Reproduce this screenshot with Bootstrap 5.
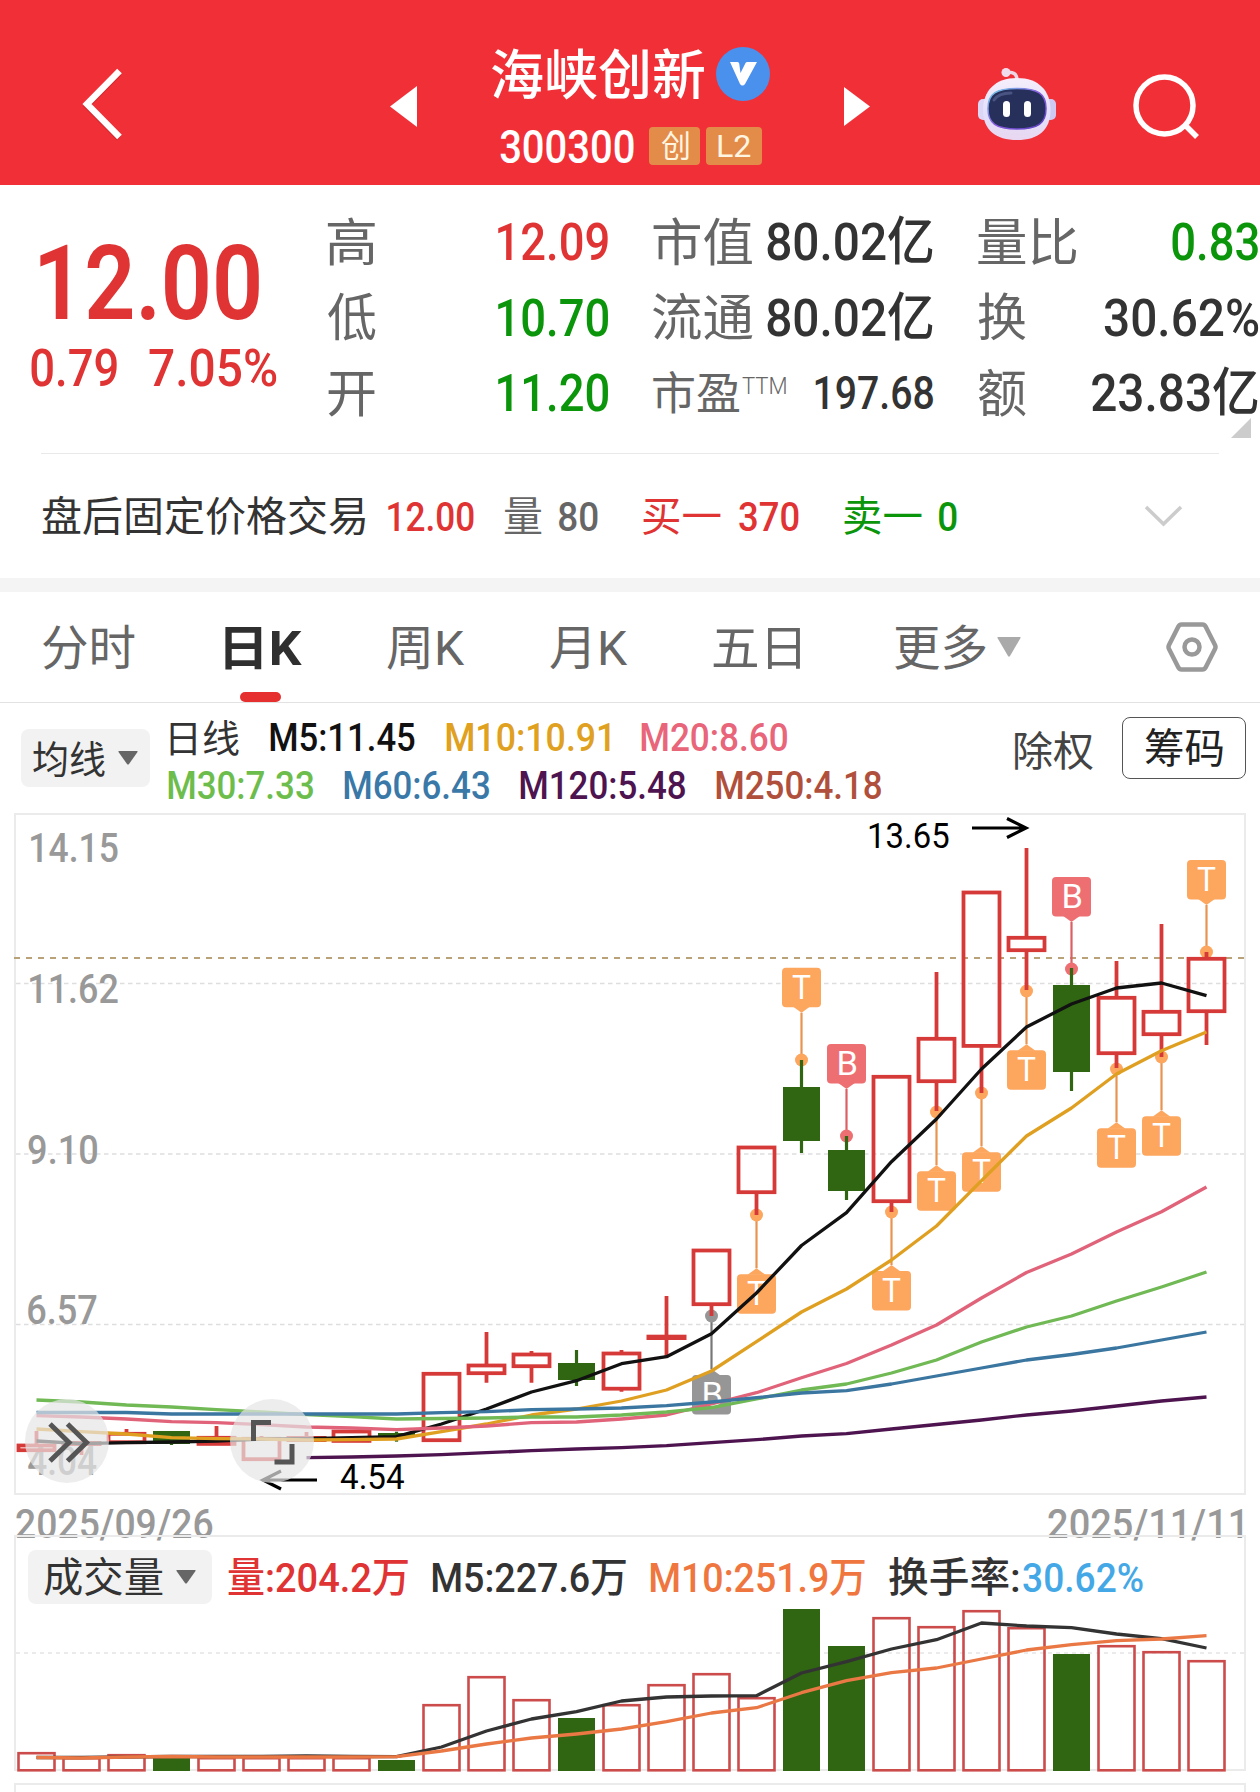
<!DOCTYPE html>
<html lang="zh-CN">
<head>
<meta charset="utf-8">
<meta name="viewport" content="width=device-width, initial-scale=1">
<title>海峡创新 300300</title>
<link href="https://cdn.jsdelivr.net/npm/bootstrap@5.3.0/dist/css/bootstrap.min.css" rel="stylesheet">
<style>
:root{--up:#e03333;--down:#0b950b;--ink:#333;--dim:#666}
body{font-family:Roboto,"Noto Sans CJK SC",sans-serif;color:var(--ink);background:#fff;width:1260px;height:1792px;overflow:hidden}
svg{display:block;flex:none}
[data-w]{display:block;flex:none;white-space:nowrap;line-height:1;padding-top:3px}
[data-w]>span{display:inline-block;transform-origin:0 50%}
.up{color:var(--up)}.down{color:var(--down)}.dim{color:var(--dim)}
.topbar{height:185px;background:#f12f37;color:#fff}
.ic-back{margin:67px 0 0 80px}
.ic-prev{margin:86px 0 0 266px}
.ttl{width:278px;margin-left:75px;padding-top:47px}
.ttl-name{height:54px;gap:12px;font-size:54px;font-weight:500}
.ttl-name [data-w]{padding-top:6px}
.ttl-code{height:38px;margin:26px 0 0 8px;gap:15px;font-size:47px;font-weight:500}
.ttl-code [data-w]{padding-top:0}
.tagbox{height:38px;border-radius:4px;background:#e38c49;color:#fff5e0;font-size:31px;font-weight:400;display:flex;align-items:center;justify-content:center}
.tag-a{width:51px}.tag-b{width:56px}
.vbadge{width:54px;height:54px;border-radius:50%;background:#4a90ed}
.ic-next{margin:87px 0 0 74px}
.ic-bot{margin:66px 0 0 107px}
.ic-find{margin:72px 0 0 75px}
.quote{height:268px;padding-top:19px;position:relative}
.q-price{width:328px;padding:26px 0 0 31px}
.q-big{font-size:103px;font-weight:600;margin:-1px 0 0 9px}
.q-chg{font-size:52px;font-weight:500;gap:32px;margin-top:5px}
.q-col{width:280px;font-size:52px;font-weight:500}
.q-col+.q-col{margin-left:45px}
.q-col>div{height:75.5px}
.q-col .dim{font-weight:400;font-size:51px}
.q-col .pe{font-size:45px}.q-col .pe-v{font-size:46px;padding-top:0}
.q-col .ttm{font-size:24px;font-weight:300;margin:-17px 0 0 2px}
.q-corner{position:absolute;right:9px;bottom:15px;width:20px;height:20px;background:#ccc;clip-path:polygon(100% 0,100% 100%,0 100%)}
.rule{height:1px;background:#e9e9e9;margin:0 41px}
.after{height:124px;padding-left:42px;font-size:41px;font-weight:500}
.after .cj{font-weight:400}
.g-price{margin-left:23px}
.g-vol{margin-left:30px;gap:17px}
.g-buy{margin-left:45px;gap:18px}
.g-sell{margin-left:45px;gap:17px}
.g-more{margin-left:187px}
.band{height:14px;background:#f4f4f4}
.ktabs{height:111px;border-bottom:1px solid #e2e2e2;padding-left:43px;font-size:48px;color:var(--dim)}
.ktabs>div{margin-left:85px}
.ktabs>.on{font-weight:700;color:#2f2f2f;position:relative;margin-left:90px}
.ktabs>.g-drop{margin-left:95px;gap:11px}
.g-set{margin-left:145px}
.on-bar{position:absolute;left:15px;top:70.5px;width:41px;height:10px;border-radius:5px;background:#e63030}
.legend-row{height:107px;padding-left:21px}
.pick{background:#f2f2f2;border-radius:8px}
.pick-ma{width:129px;height:58px;margin-top:26px;padding-left:12px;gap:13px;font-size:38px}
.pick-vol{width:184px;height:54px;margin:13px 0 0 12px;padding-left:16px;gap:13px;font-size:41px}
.ma{font-size:38.5px;font-weight:500;margin-left:18px;padding-top:10px;width:722px}
.ma>div{height:48px;gap:31px}
.ma .cj{font-weight:400;font-size:38px;margin-left:2px}
.m5{color:#111}.m10{color:#e0a020}.m20{color:#e8657a}.m30{color:#6dbd4d}.m60{color:#3a78a8}.m120{color:#4e1450}.m250{color:#b0503c}
.cq{font-size:41px;color:#444;margin:26px 0 0 125px}
.chips{width:124px;height:62px;border:1.5px solid #555;border-radius:8px;margin:14px 0 0 29px;font-size:41px;color:#222}
.kwrap{position:relative;height:690px}
.fab{position:absolute;top:589px;width:84px;height:84px;border-radius:50%;background:rgba(229,229,229,.7);border:0;padding:0}
.fab-a{left:25px}.fab-b{left:230px}
.dates{height:35px;padding:2px 18px 0 16px;font-size:40px;font-weight:500;color:#999}
.volbox{height:236px;margin:0 14px;border:2px solid #ebebeb;position:relative}
.vinfo{height:67px;font-size:41px;font-weight:500}
.vinfo .vals{margin-top:13px;height:54px;margin-left:16px;gap:24px}
.v10{color:#f07640}.vrate{color:#45a8e6}
.subbox{height:20px;margin:12px 14px 0;border:2px solid #ebebeb}
</style>
<script src="https://cdn.jsdelivr.net/npm/bootstrap@5.3.0/dist/js/bootstrap.bundle.min.js"></script>
</head>
<body>
<header class="topbar d-flex align-items-start">
  <svg class="ic-back" width="44" height="74" viewBox="80 67 44 74"><path d="M119 71.500 87 104l32 32.500" fill="none" stroke="#b8222a" stroke-opacity=".5" stroke-width="6" transform="translate(0 2)"/><path d="M119.500 71 87 104l32.500 33" fill="none" stroke="#fff" stroke-width="6.500"/></svg>
  <svg class="ic-prev" width="27" height="41" viewBox="0 0 27 41"><path d="M27 0v41L0 20.500z" fill="#fff"/></svg>
  <div class="ttl">
    <div class="ttl-name d-flex align-items-center">
      <span data-w="212">海峡创新</span>
      <div class="vbadge d-flex align-items-center justify-content-center"><svg width="30" height="24" viewBox="0 0 30 24"><path d="M2 0h7.500q1.500 0 1.700 1.500L12.500 11 17.500 1q.5-1 2-1H29L17 22q-1 1.500-2.500 1.500T12 22z" fill="#fff"/></svg></div>
    </div>
    <div class="ttl-code d-flex align-items-center">
      <span data-w="134">300300</span>
      <div class="d-flex" style="gap:6px"><div class="tagbox tag-a"><span data-w="28">创</span></div><div class="tagbox tag-b"><span data-w="33">L2</span></div></div>
    </div>
  </div>
  <svg class="ic-next" width="26" height="39" viewBox="0 0 26 39"><path d="M0 0v39l26-19.500z" fill="#fff"/></svg>
  <svg class="ic-bot" width="80" height="76" viewBox="977 66 80 76">
    <defs><linearGradient id="shell" x1="0" y1="0" x2="0" y2="1"><stop offset="0" stop-color="#f6eefb"/><stop offset=".6" stop-color="#e3dffa"/><stop offset="1" stop-color="#e9d7f0"/></linearGradient>
    <linearGradient id="rim" x1="0" y1="0" x2="1" y2="1"><stop offset="0" stop-color="#6fd3e8"/><stop offset=".5" stop-color="#8a5be0"/><stop offset="1" stop-color="#5a3fc0"/></linearGradient></defs>
    <path d="M1006 72.500c7-1 11 1 11 8" fill="none" stroke="#eed5e6" stroke-width="3.500"/><circle cx="1006" cy="72.500" r="4.500" fill="#f0dcec"/>
    <rect x="978" y="99" width="12" height="21" rx="5" fill="#dcd6f7"/><rect x="1044" y="99" width="12" height="21" rx="5" fill="#cfc8f3"/>
    <path d="M1017 78c22 0 33.500 13 33.500 32 0 20-12 30-33.500 30s-34-10-34-30c0-19 12-32 34-32z" fill="url(#shell)"/>
    <path d="M1017 88.500c21 0 29 5 29 20s-8 20.500-29 20.500-29-5.500-29-20.500 8-20 29-20z" fill="#27305a" stroke="url(#rim)" stroke-width="1.500"/>
    <path d="M994 100c4-6 11-7 17-7" fill="none" stroke="#4a5482" stroke-width="3" stroke-linecap="round"/>
    <rect x="1003" y="101" width="7" height="16" rx="3.500" fill="#fff"/><rect x="1024" y="101" width="7" height="16" rx="3.500" fill="#fff"/>
  </svg>
  <svg class="ic-find" width="70" height="70" viewBox="1132 72 70 70"><g fill="none" stroke="#fff" stroke-width="5.500"><circle cx="1164.500" cy="105.500" r="28.500"/><path d="M1185 125l12 12"/></g></svg>
</header>

<section class="quote d-flex">
  <div class="q-price">
    <div class="q-big up"><span data-w="219">12.00</span></div>
    <div class="q-chg up d-flex"><span data-w="86">0.79</span><span data-w="127">7.05%</span></div>
  </div>
  <div class="q-col">
    <div class="d-flex align-items-center justify-content-between"><span class="dim" data-w="47">高</span><span class="up" data-w="110">12.09</span></div>
    <div class="d-flex align-items-center justify-content-between"><span class="dim" data-w="48">低</span><span class="down" data-w="110">10.70</span></div>
    <div class="d-flex align-items-center justify-content-between"><span class="dim" data-w="47">开</span><span class="down" data-w="110">11.20</span></div>
  </div>
  <div class="q-col">
    <div class="d-flex align-items-center justify-content-between"><span class="dim" data-w="99">市值</span><span data-w="166">80.02亿</span></div>
    <div class="d-flex align-items-center justify-content-between"><span class="dim" data-w="100">流通</span><span data-w="166">80.02亿</span></div>
    <div class="d-flex align-items-center justify-content-between"><div class="d-flex align-items-center"><span class="dim pe" data-w="87">市盈</span><span class="dim ttm" data-w="44">TTM</span></div><span class="pe-v" data-w="118">197.68</span></div>
  </div>
  <div class="q-col">
    <div class="d-flex align-items-center justify-content-between"><span class="dim" data-w="99">量比</span><span class="down" data-w="86">0.83</span></div>
    <div class="d-flex align-items-center justify-content-between"><span class="dim" data-w="48">换</span><span data-w="154">30.62%</span></div>
    <div class="d-flex align-items-center justify-content-between"><span class="dim" data-w="48">额</span><span data-w="166">23.83亿</span></div>
  </div>
  <div class="q-corner"></div>
</section>
<div class="rule"></div>
<section class="after d-flex align-items-center">
  <span class="cj" data-w="323">盘后固定价格交易</span>
  <div class="g-price up d-flex"><span data-w="86">12.00</span></div>
  <div class="g-vol dim d-flex align-items-center"><span class="cj" data-w="38">量</span><span data-w="39">80</span></div>
  <div class="g-buy up d-flex align-items-center"><span class="cj" data-w="78">买一</span><span data-w="60">370</span></div>
  <div class="g-sell down d-flex align-items-center"><span class="cj" data-w="78">卖一</span><span data-w="18">0</span></div>
  <svg class="g-more" width="40" height="24" viewBox="0 0 40 24"><path d="M2 3l17.500 17L37 3" fill="none" stroke="#ccc" stroke-width="3.500"/></svg>
</section>
<div class="band"></div>
<nav class="ktabs d-flex align-items-center">
  <span data-w="92">分时</span>
  <div class="on"><span data-w="77">日K</span><i class="on-bar"></i></div>
  <div><span data-w="78">周K</span></div>
  <div><span data-w="78">月K</span></div>
  <div><span data-w="87">五日</span></div>
  <div class="g-drop d-flex align-items-center"><span data-w="91">更多</span><svg width="24" height="20" viewBox="0 0 24 20"><path d="M1 0h22q1 0 .5 1L13 19q-1 1.500-2 0L.5 1Q0 0 1 0z" fill="#aaa"/></svg></div>
  <svg class="g-set" width="52" height="50" viewBox="0 0 52 50"><g fill="none" stroke="#999" stroke-width="4.500"><path stroke-linejoin="round" d="M15.500 2.500h21q2 0 3 1.800L49 23q1 2 0 4l-9.500 18.700q-1 1.800-3 1.800h-21q-2 0-3-1.800L3 27q-1-2 0-4l9.500-18.700q1-1.800 3-1.800z"/><circle cx="26" cy="25" r="7.500"/></g></svg>
</nav>
<section class="legend-row d-flex align-items-start">
  <div class="pick pick-ma d-flex align-items-center"><span data-w="72">均线</span><svg width="20" height="14" viewBox="0 0 20 14"><path d="M1 0h18q1 0 .5 1L11 13q-1 1-2 0L.5 1Q0 0 1 0z" fill="#666"/></svg></div>
  <div class="ma">
    <div class="d-flex align-items-center"><span class="cj" data-w="69">日线</span><span class="m5" data-w="145">M5:11.45</span><span class="m10" data-w="164">M10:10.91</span><span class="m20" data-w="146">M20:8.60</span></div>
    <div class="d-flex align-items-center"><span class="m30" data-w="145">M30:7.33</span><span class="m60" data-w="145">M60:6.43</span><span class="m120" data-w="165">M120:5.48</span><span class="m250" data-w="165">M250:4.18</span></div>
  </div>
  <div class="cq"><span data-w="78">除权</span></div>
  <div class="chips d-flex align-items-center justify-content-center"><span data-w="78">筹码</span></div>
</section>
<section class="kwrap">
  <svg id="kchart" width="1260" height="690" viewBox="0 810 1260 690"></svg>
  <button class="fab fab-a"><svg width="84" height="84" viewBox="0 0 84 84"><path d="M25 25l19 18.500L25 62M42.500 25l19 18.500-19 18.500" fill="none" stroke="#555" stroke-width="5"/></svg></button>
  <button class="fab fab-b"><svg width="84" height="84" viewBox="0 0 84 84"><path d="M41 23.500H23.500V42M44.500 63H62V45" fill="none" stroke="#555" stroke-width="5"/></svg></button>
</section>
<div class="dates d-flex justify-content-between"><span data-w="197">2025/09/26</span><span data-w="194">2025/11/11</span></div>
<section class="volbox">
  <div class="vinfo d-flex">
    <div class="pick pick-vol d-flex align-items-center"><span data-w="119" class="fw-normal">成交量</span><svg width="20" height="14" viewBox="0 0 20 14"><path d="M1 0h18q1 0 .5 1L11 13q-1 1-2 0L.5 1Q0 0 1 0z" fill="#666"/></svg></div>
    <div class="vals d-flex align-items-center"><span class="up" data-w="180">量:204.2万</span><span data-w="194">M5:227.6万</span><span class="v10" data-w="215">M10:251.9万</span><div class="d-flex gap-1"><span data-w="130">换手率:</span><span class="vrate" data-w="120">30.62%</span></div></div>
  </div>
  <svg id="vchart" width="1228" height="170" viewBox="16 1604 1228 170" overflow="visible"></svg>
</section>
<div class="subbox"></div>

<script>
const ctx = document.createElement('canvas').getContext('2d');
const FAM = 'Roboto,"Noto Sans CJK SC",sans-serif';
// Condense each label horizontally so that its ink is exactly data-w wide
document.querySelectorAll('[data-w]').forEach(el => {
  const cs = getComputedStyle(el), t = el.textContent, w = +el.dataset.w;
  ctx.font = `${cs.fontWeight} ${cs.fontSize} ${FAM}`;
  const m = ctx.measureText(t), s = w / (m.actualBoundingBoxLeft + m.actualBoundingBoxRight);
  const inner = document.createElement('span');
  inner.textContent = t;
  inner.style.transform = `scaleX(${s}) translateX(${m.actualBoundingBoxLeft}px)`;
  el.replaceChildren(inner);
  el.style.width = w + 'px';
});
function label(t, x, base, w, size, weight, fill) {
  ctx.font = `${weight} ${size}px ${FAM}`;
  const m = ctx.measureText(t), s = w / (m.actualBoundingBoxLeft + m.actualBoundingBoxRight);
  return `<text transform="translate(${x} ${base}) scale(${s} 1) translate(${m.actualBoundingBoxLeft} 0)" font-family='${FAM}' font-size="${size}" font-weight="${weight}" fill="${fill}">${t}</text>`;
}
const X = i => 36.5 + 45 * i, RED = '#d63a38', GREEN = '#306612';
const line = (ys, c, from = 0, w = 3.3) => `<polyline fill="none" stroke="${c}" stroke-width="${w}" stroke-linejoin="round" points="${ys.map((y, k) => X(k + from) + ',' + y).join(' ')}"/>`;

// top, bottom, wick high, wick low, falling
const candles = [
 [1443.7,1452,1431,1452],[1441,1446,1441,1455],[1432,1444,1429,1444],[1431,1444,1431,1445,1],[1436,1445.7,1426,1445],
 [1437,1461,1436,1461],[1436,1442,1432,1442],[1429.7,1442.7,1430,1442],[1433,1437,1431.7,1441.7,1],[1372,1442,1373,1441],
 [1363.7,1375,1332,1382.7],[1352.7,1368,1351,1382.7],[1363,1380,1350,1386,1],[1351.7,1390.5,1350,1391.7],[1334.7,1340,1296,1357.7],
 [1248.7,1306,1250,1316],[1145.7,1194,1147,1215],[1087,1141,1060,1153,1],[1150,1191,1136,1200,1],[1075,1203,1076,1212],
 [1037,1083,972,1111],[890.7,1047.7,892,1093],[936,952,848,990],[985,1072,968,1091,1],[996,1055,961,1068],
 [1010,1036,924,1057],[957,1013,952,1045]];
// candle, letter, dot y, box top, colour, stem colour
const marks = [[15,'B',1316,1375,'#969696','#777'],[16,'T',1215,1274.3,'#fda65e','#e89350'],[17,'T',1060,967.7,'#fda65e','#e89350'],
 [18,'B',1136,1044,'#ee6f72','#dc5f63'],[19,'T',1212,1271,'#fda65e','#e89350'],[20,'T',1112,1171.3,'#fda65e','#e89350'],[21,'T',1093,1152.3,'#fda65e','#e89350'],
 [22,'T',991,1050.3,'#fda65e','#e89350'],[23,'B',969,877,'#ee6f72','#dc5f63'],[24,'T',1069,1128.3,'#fda65e','#e89350'],[25,'T',1057,1116.3,'#fda65e','#e89350'],[26,'T',952,860,'#fda65e','#e89350']];
let k = '<rect x="15" y="814" width="1230" height="680" fill="none" stroke="#ebebeb" stroke-width="2"/>';
for (const y of [983.5, 1154, 1324.5]) k += `<path d="M16 ${y}H1244" stroke="#dedede" stroke-width="1.5" stroke-dasharray="4.500 3.500"/>`;
k += '<path d="M14 958H1245" stroke="#b9a278" stroke-width="2" stroke-dasharray="6 6"/>';
k += label('14.15',31,862,87,40.5,500,'#999') + label('11.62',30,1003,88,40.5,500,'#999') + label('9.10',28,1164,69,40.5,500,'#999') + label('6.57',28,1324,69,40.5,500,'#999') + label('4.04',28,1475,69,40.5,500,'#999');
for (const [i, ch, dot, top, c, lc] of marks) {
  const x = X(i), below = top > dot, apex = below ? top - 6 : top + 45, base = below ? top + .5 : top + 38.5;
  k += `<path d="M${x} ${dot}V${apex}" stroke="${lc}" stroke-width="2.200"/><circle cx="${x}" cy="${dot}" r="6.500" fill="${c}"/>` +
    `<path d="M${x-9} ${base}H${x+9}L${x} ${apex}z" fill="${c}"/><rect x="${x-19.500}" y="${top}" width="39" height="39.500" rx="4" fill="${c}"/>` +
    label(ch, x - (ch === 'T' ? 9.5 : 8), top + 31, ch === 'T' ? 19 : 17.5, 33.5, 400, '#fff');
}
candles.forEach(([t, b, h, l, g], i) => {
  const x = X(i);
  if (g) k += `<path d="M${x} ${h}V${l}" stroke="${GREEN}" stroke-width="3.200"/><rect x="${x-18.500}" y="${t}" width="37" height="${b-t}" fill="${GREEN}"/>`;
  else {
    k += `<path d="M${x} ${h}V${t+1}M${x} ${b-1}V${l}" stroke="${RED}" stroke-width="3.800"/>`;
    k += b - t < 7 ? `<rect x="${x-20}" y="${t}" width="40" height="${b-t}" fill="${RED}"/>`
      : `<rect x="${x-18}" y="${t+1.800}" width="36" height="${b-t-3.600}" fill="none" stroke="${RED}" stroke-width="3.800"/>`;
  }
});
k += line([1457.7,1457,1456,1454.7,1452.7,1450.7,1449,1447.7,1445.7,1442.7,1439.7,1436,1433.7,1429,1424.5,1420,1415,1411,1406,1401,1397], '#4e1450', 6);
k += line([1441,1443.7,1442.7,1442,1441,1439,1438.7,1437.7,1436.7,1424,1409,1392,1380.7,1363.7,1356.7,1333.7,1293,1245.5,1212.7,1161.7,1119,1069,1027,1004,988,983,995.7], '#111');
k += line([1429,1431.7,1434,1437.7,1438.7,1439,1440,1439.7,1439,1431.7,1424,1415,1409,1401,1390,1371,1341.7,1312,1289,1260,1226,1180.7,1136,1108,1074,1050.7,1032], '#dfa022');
k += line([1415.7,1417,1419,1421.7,1422.7,1424.7,1427,1428,1429.7,1428,1426,1422.7,1422,1419,1415,1404,1392.7,1377.7,1363.5,1345,1325,1298,1272.5,1254,1232,1211.7,1187], '#e0637a');
k += line([1400,1402,1405,1407,1409.7,1412,1414.7,1416.7,1419,1418.5,1418,1417,1417,1415,1412,1407.7,1399,1390,1384,1373,1360,1342,1327,1316,1301,1287,1272], '#70b955');
k += line([1412.5,1412.5,1412.5,1414,1414,1414,1414,1414,1414,1412.7,1411.7,1409.7,1409,1408,1405.7,1402,1397.7,1393,1390.7,1384,1376,1368,1360,1354.5,1348,1340,1332], '#3a76a0');
k += label('13.65',869,848,80,35,400,'#000') + label('4.54',340,1489,64,35,400,'#000');
k += '<path d="M972 828H1026M1007 818.500L1026 828 1007 837.500M317 1480H263M281 1471L263 1480 281 1489" fill="none" stroke="#000" stroke-width="3.200"/>';
document.getElementById('kchart').innerHTML = k;

const vols = [1752,1757,1754,1758,1757,1757,1757,1757,1760,1704,1676,1699,1718,1704,1684,1673,1697,1609,1646,1617,1626,1610,1627,1654,1645,1651,1660];
let v = '<path d="M16 1653H1244" stroke="#ebebeb" stroke-width="2" stroke-dasharray="4 4"/>';
vols.forEach((t, i) => {
  const x = X(i);
  v += candles[i][4] ? `<rect x="${x-18.500}" y="${t}" width="37" height="${1771-t}" fill="${GREEN}"/>`
    : `<rect x="${x-18}" y="${t+1.200}" width="36" height="${1771.500-t-2.400}" fill="none" stroke="#cc4c4c" stroke-width="2.600"/>`;
});
v += line([1757.5,1757.5,1757,1756.5,1756.5,1756.5,1756,1756.5,1756.7,1747,1731,1719,1711.7,1701,1697,1696,1695.7,1673,1661.7,1649,1639.7,1623,1626,1627.7,1634,1638.7,1648], '#333');
v += line([1757.5,1758,1757,1756.5,1757,1757,1757,1757,1756.7,1751,1744,1738,1734,1729,1721.7,1713,1707.7,1692.7,1680.7,1672.7,1668,1659,1650,1644.7,1640.7,1639,1635.7], '#ea7845');
document.getElementById('vchart').innerHTML = v;
</script>
</body>
</html>
